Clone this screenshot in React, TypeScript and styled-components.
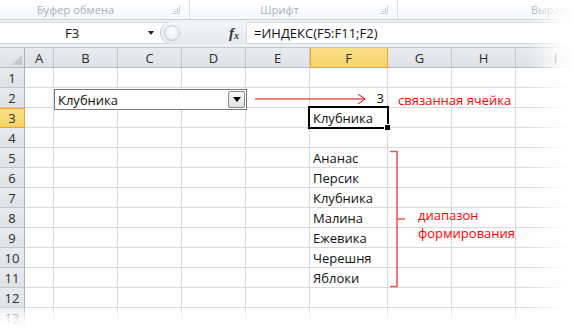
import React from "react";
import styled, { createGlobalStyle, css } from "styled-components";

const Global = createGlobalStyle`
  html, body { margin: 0; padding: 0; background: #fff; }
  body { width: 573px; height: 327px; overflow: hidden; font-family: "Open Sans", "Noto Sans", sans-serif; }
  #root { width: 573px; height: 327px; }
`;

const Page = styled.div`
  position: relative;
  width: 573px;
  height: 327px;
  overflow: hidden;
  display: flex;
  flex-direction: column;
  background: #fff;
`;

/* ---------- ribbon group captions ---------- */
const Ribbon = styled.div`
  height: 19px;
  display: flex;
  background: linear-gradient(#ffffff, #f6f8fb);
  border-bottom: 1px solid #c9ced4;
  flex-shrink: 0;
`;

const Group = styled.div<{ $w?: number }>`
  ${(p) =>
    p.$w
      ? css`width: ${p.$w}px; flex-shrink: 0;`
      : css`flex: 1; min-width: 0; overflow: hidden;`}
  box-sizing: border-box;
  display: flex;
  align-items: center;
  position: relative;
  border-right: 1px solid #dde1e6;
  box-shadow: inset -1px 0 0 #ffffff;
`;

const GroupLabel = styled.span<{ $shift?: number; $start?: number }>`
  flex: 1;
  text-align: ${(p) => (p.$start !== undefined ? "left" : "center")};
  font-size: 11px;
  color: #a9afb7;
  letter-spacing: 0.1px;
  white-space: nowrap;
  padding-right: ${(p) => p.$shift ?? 0}px;
  padding-left: ${(p) => p.$start ?? 0}px;
`;

const Launcher = styled.span`
  width: 7px;
  height: 7px;
  margin-right: 9px;
  border: 1px solid #c5cad0;
  border-top-color: transparent;
  border-left-color: transparent;
  position: relative;
  opacity: 0.8;
  &::after {
    content: "";
    position: absolute;
    right: 1px;
    bottom: 1px;
    width: 3px;
    height: 3px;
    border-right: 1px solid #b8bec5;
    border-bottom: 1px solid #b8bec5;
  }
`;

/* ---------- formula bar ---------- */
const FormulaBar = styled.div`
  height: 25px;
  background: #eef1f4;
  padding-top: 2px;
  display: flex;
  flex-direction: column;
  flex-shrink: 0;
  border-bottom: 1px solid #c2c7cd;
`;

const FormulaRow = styled.div`
  height: 20px;
  display: flex;
  background: #fff;
  border-top: 1px solid #d5dae0;
  border-bottom: 1px solid #d5dae0;
`;

const NameBox = styled.div`
  width: 160px;
  flex-shrink: 0;
  display: flex;
  align-items: center;
  position: relative;
  font-size: 13px;
  color: #111;
`;

const NameText = styled.span`
  flex: 1;
  text-align: center;
  padding-right: 4px;
`;

const NameArrow = styled.span`
  width: 0;
  height: 0;
  margin-right: 6px;
  border-left: 3.5px solid transparent;
  border-right: 3.5px solid transparent;
  border-top: 4px solid #222;
`;

const Splitter = styled.div`
  width: 85px;
  flex-shrink: 0;
  display: flex;
  align-items: center;
  background: linear-gradient(#f4f6f8, #e6e9ed);
  border-radius: 11px 0 0 11px;
  border-left: 1px solid #c7ccd2;
  margin: -1px 0;
`;

const Knob = styled.span`
  width: 14px;
  height: 14px;
  margin-left: 3px;
  border-radius: 50%;
  background: radial-gradient(circle at 50% 40%, #ffffff 0%, #eceff2 60%, #d5d9de 100%);
  border: 1px solid #c9ced3;
`;

const Fx = styled.span`
  margin-left: auto;
  margin-right: 7px;
  font-family: "Liberation Serif", "DejaVu Serif", serif;
  font-style: italic;
  font-weight: bold;
  font-size: 15px;
  color: #333;
  line-height: 1;
  & > sub {
    font-size: 10px;
    vertical-align: -1px;
  }
`;

const FormulaInput = styled.div`
  flex: 1;
  display: flex;
  align-items: center;
  padding-left: 7px;
  font-size: 13px;
  color: #111;
  border-left: 1px solid #d5dae0;
`;

/* ---------- sheet grid ---------- */
const COLS = [25, 29, 64, 64, 64, 64, 78, 64, 64, 80];
const LETTERS = ["A", "B", "C", "D", "E", "F", "G", "H", "I"];

const SheetWrap = styled.div`
  position: relative;
  flex: 1;
`;

const Grid = styled.div`
  display: grid;
  grid-template-columns: ${COLS.map((c) => c + "px").join(" ")};
  grid-auto-rows: 20px;
`;

const headerBase = css<{ $active?: boolean }>`
  display: flex;
  align-items: center;
  justify-content: center;
  font-size: 13px;
  color: #2b2b2b;
  box-sizing: border-box;
  background: ${(p) =>
    p.$active ? "linear-gradient(#fbe08a, #f7d468)" : "linear-gradient(#e8ebef, #dee2e7)"};
`;

const ColHead = styled.div<{ $active?: boolean }>`
  ${headerBase};
  border-right: 1px solid ${(p) => (p.$active ? "#f0a33a" : "#c3c8ce")};
  border-bottom: 1px solid ${(p) => (p.$active ? "#f0a33a" : "#b4bac1")};
  ${(p) => p.$active && css`box-shadow: inset 1px 0 0 #f0a33a;`}
`;

const RowHead = styled.div<{ $active?: boolean }>`
  ${headerBase};
  border-right: 1px solid ${(p) => (p.$active ? "#f0a33a" : "#a9b0b8")};
  border-bottom: 1px solid ${(p) => (p.$active ? "#f0a33a" : "#c3c8ce")};
  ${(p) => p.$active && css`box-shadow: inset 0 1px 0 #f0a33a;`}
`;

const Corner = styled.div`
  position: relative;
  box-sizing: border-box;
  background: linear-gradient(#e8ebef, #dee2e7);
  border-right: 1px solid #a9b0b8;
  border-bottom: 1px solid #b4bac1;
  &::after {
    content: "";
    position: absolute;
    right: 2px;
    bottom: 2px;
    width: 0;
    height: 0;
    border-left: 10px solid transparent;
    border-bottom: 10px solid #c4c9cf;
  }
`;

const Cell = styled.div<{ $align?: "left" | "right"; $selected?: boolean }>`
  position: relative;
  box-sizing: border-box;
  border-right: 1px solid #d9d9d9;
  border-bottom: 1px solid #d9d9d9;
  font-size: 13px;
  color: #111;
  line-height: 20px;
  padding: 0 3px;
  white-space: nowrap;
  text-align: ${(p) => p.$align ?? "left"};
  ${(p) =>
    p.$selected &&
    css`
      z-index: 2;
      &::before {
        content: "";
        position: absolute;
        left: -2px;
        top: -2px;
        right: -2px;
        bottom: -2px;
        border: 2px solid #000;
      }
      &::after {
        content: "";
        position: absolute;
        right: -4px;
        bottom: -4px;
        width: 5px;
        height: 5px;
        background: #000;
        border: 1px solid #fff;
      }
    `}
`;

/* ---------- overlays ---------- */
const Combo = styled.div`
  position: absolute;
  left: 54px;
  top: 41px;
  width: 193px;
  height: 21px;
  box-sizing: border-box;
  background: #fff;
  border: 1px solid #7a7a7a;
  display: flex;
  align-items: center;
  z-index: 3;
`;

const ComboText = styled.span`
  flex: 1;
  padding-left: 3px;
  font-size: 13px;
  color: #111;
`;

const ComboButton = styled.span`
  width: 17px;
  height: 17px;
  margin-right: 1px;
  box-sizing: border-box;
  border: 1px solid #8a8a8a;
  border-radius: 2px;
  background: linear-gradient(#fbfbfb, #e1e1e1);
  display: flex;
  align-items: center;
  justify-content: center;
  &::after {
    content: "";
    width: 0;
    height: 0;
    border-left: 4.5px solid transparent;
    border-right: 4.5px solid transparent;
    border-top: 5px solid #000;
  }
`;

const Note = styled.div<{ $x: number; $y: number }>`
  position: absolute;
  left: ${(p) => p.$x}px;
  top: ${(p) => p.$y}px;
  font-size: 13px;
  line-height: 18px;
  color: #ff0000;
  white-space: nowrap;
  z-index: 3;
`;

const Drawing = styled.svg<{ $x: number; $y: number }>`
  position: absolute;
  left: ${(p) => p.$x}px;
  top: ${(p) => p.$y}px;
  overflow: visible;
  z-index: 3;
`;

const FadeRight = styled.div`
  position: absolute;
  top: 0;
  right: 0;
  bottom: 0;
  width: 44px;
  background: linear-gradient(to right, rgba(255, 255, 255, 0), rgba(255, 255, 255, 0.85) 70%, #fff);
  pointer-events: none;
  z-index: 5;
`;

const FadeBottom = styled.div`
  position: absolute;
  left: 0;
  right: 0;
  bottom: 0;
  height: 22px;
  background: linear-gradient(rgba(255, 255, 255, 0), rgba(255, 255, 255, 0.85) 60%, #fff);
  pointer-events: none;
  z-index: 5;
`;

const cellData: Record<string, { text: string; align?: "left" | "right" }> = {
  F2: { text: "3", align: "right" },
  F3: { text: "Клубника" },
  F5: { text: "Ананас" },
  F6: { text: "Персик" },
  F7: { text: "Клубника" },
  F8: { text: "Малина" },
  F9: { text: "Ежевика" },
  F10: { text: "Черешня" },
  F11: { text: "Яблоки" },
};

export default function App() {
  const rows = Array.from({ length: 13 }, (_, i) => i + 1);
  return (
    <Page>
      <Global />
      <Ribbon>
        <Group $w={190}>
          <GroupLabel $shift={20}>Буфер обмена</GroupLabel>
          <Launcher />
        </Group>
        <Group $w={208}>
          <GroupLabel $shift={10}>Шрифт</GroupLabel>
          <Launcher />
        </Group>
        <Group>
          <GroupLabel $start={133}>Выравнивание</GroupLabel>
        </Group>
      </Ribbon>

      <FormulaBar>
        <FormulaRow>
          <NameBox>
            <NameText>F3</NameText>
            <NameArrow />
          </NameBox>
          <Splitter>
            <Knob />
            <Fx>
              f<sub>x</sub>
            </Fx>
          </Splitter>
          <FormulaInput>=ИНДЕКС(F5:F11;F2)</FormulaInput>
        </FormulaRow>
      </FormulaBar>

      <SheetWrap>
        <Grid>
          <Corner />
          {LETTERS.map((l) => (
            <ColHead key={l} $active={l === "F"}>
              {l}
            </ColHead>
          ))}
          {rows.map((r) => (
            <React.Fragment key={r}>
              <RowHead $active={r === 3}>{r}</RowHead>
              {LETTERS.map((l) => {
                const d = cellData[l + r];
                return (
                  <Cell key={l + r} $align={d?.align} $selected={l === "F" && r === 3}>
                    {d?.text}
                  </Cell>
                );
              })}
            </React.Fragment>
          ))}
        </Grid>

        <Combo>
          <ComboText>Клубника</ComboText>
          <ComboButton />
        </Combo>

        <Drawing $x={255} $y={45} width={112} height={12} viewBox="0 0 112 12">
          <line x1="0" y1="6" x2="110" y2="6" stroke="#e00000" strokeWidth="1" />
          <polyline points="103,1 110,6 103,11" fill="none" stroke="#e00000" strokeWidth="1" />
        </Drawing>
        <Note $x={398} $y={43}>связанная ячейка</Note>

        <Drawing $x={388} $y={101} width={20} height={140} viewBox="0 0 20 140">
          <path d="M2 2.5 H9 V137.5 H2 M9 70 H17" fill="none" stroke="#f25555" strokeWidth="1.6" />
        </Drawing>
        <Note $x={418} $y={158}>диапазон</Note>
        <Note $x={418} $y={176}>формирования</Note>
      </SheetWrap>

      <FadeRight />
      <FadeBottom />
    </Page>
  );
}
